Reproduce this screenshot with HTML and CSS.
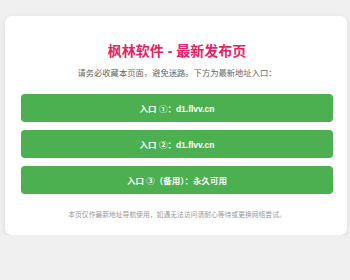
FILE: index.html
```html
<!DOCTYPE html>
<html lang="zh-CN">
<head>
<meta charset="utf-8">
<title>枫林软件 - 最新发布页</title>
<link rel="stylesheet" href="styles.css">
</head>
<body>
<div class="card">
  <h1 class="title">枫林软件 - 最新发布页</h1>
  <p class="subtitle">请务必收藏本页面，避免迷路。下方为最新地址入口：</p>
  <div class="links">
    <a class="btn" href="#">入口 ①：d1.flvv.cn</a>
    <a class="btn" href="#">入口 ②：d1.flvv.cn</a>
    <a class="btn" href="#">入口 ③（备用）：永久可用</a>
  </div>
  <p class="footer">本页仅作最新地址导航使用，如遇无法访问请耐心等待或更换网络尝试。</p>
</div>
</body>
</html>
```
FILE: styles.css
```css
html, body {
  margin: 0;
  padding: 0;
  background: #f0f0f0;
}
body {
  font-family: "Liberation Sans", "Noto Sans CJK SC", sans-serif;
  padding: 16px 3px 0 5px;
}
.card {
  background: #fff;
  border-radius: 7px;
  box-shadow: 0 2px 8px rgba(0, 0, 0, 0.08);
  padding: 25px 14px 15px 16px;
  text-align: center;
}
.title {
  margin: 0;
  font-size: 14px;
  line-height: 20px;
  font-weight: bold;
  color: #e91e63;
}
.subtitle {
  margin: 6px 0 0;
  font-size: 8.3px;
  line-height: 12px;
  color: #666;
}
.links {
  margin-top: 15px;
  display: flex;
  flex-direction: column;
  gap: 8px;
}
.btn {
  display: flex;
  align-items: center;
  justify-content: center;
  height: 28px;
  background: #4caf50;
  color: #fff;
  border-radius: 4px;
  font-size: 8.5px;
  font-weight: bold;
  text-decoration: none;
}
.footer {
  margin: 16px 0 0;
  font-size: 6.8px;
  line-height: 10px;
  color: #999;
}
```
